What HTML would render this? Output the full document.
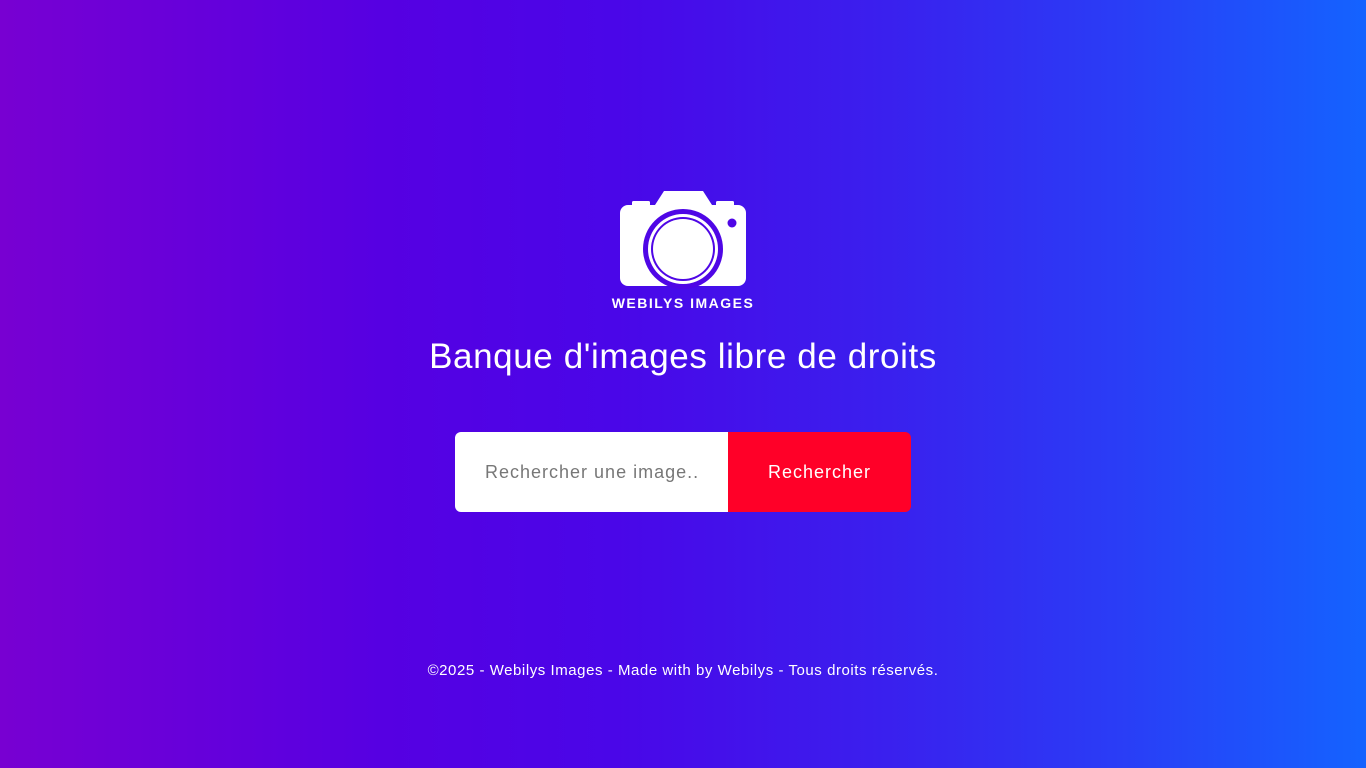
<!DOCTYPE html>
<html><head><meta charset="utf-8"><style>
html,body{margin:0;width:1366px;height:768px;overflow:hidden}
body{background:linear-gradient(90deg,#7800d2 0%,#5600e2 28%,#4a06e8 45%,#3a20ee 65%,#2a3df6 82%,#1463ff 100%);font-family:"Liberation Sans",sans-serif;color:#fff;position:relative}
.t{position:absolute;left:0;width:1366px;text-align:center;white-space:nowrap}
#logo{position:absolute;left:600px;top:180px}
h1{font-weight:normal;font-size:35px;top:337px;margin:0;letter-spacing:0.6px}
.in{position:absolute;left:455px;top:432px;width:273px;height:80px;background:#fff;border-radius:6px 0 0 6px;color:#777;font-size:18px;line-height:80px;box-sizing:border-box;padding-left:30px;letter-spacing:1px;white-space:nowrap}
.bt{position:absolute;left:728px;top:432px;width:183px;height:80px;background:#ff0028;border-radius:0 6px 6px 0;color:#fff;font-size:18px;line-height:80px;text-align:center;letter-spacing:1px}
.f{top:662px;font-size:15px;letter-spacing:0.55px}
</style></head><body>
<svg id="logo" width="170" height="140" viewBox="600 180 170 140">
<path d="M664 191 H703 L712 205 H655 Z" fill="#fff"/>
<rect x="632" y="201" width="18" height="6" rx="1.5" fill="#fff"/>
<rect x="716" y="201" width="18" height="6" rx="1.5" fill="#fff"/>
<rect x="620" y="205" width="126" height="81" rx="8" fill="#fff"/>
<circle cx="683" cy="249" r="40" fill="#4f06e6"/>
<circle cx="683" cy="249" r="35" fill="#fff"/>
<circle cx="683" cy="249" r="32" fill="#4f06e6"/>
<circle cx="683" cy="249" r="30" fill="#fff"/>
<circle cx="732" cy="223" r="4.5" fill="#4f06e6"/>
<text x="683" y="308" text-anchor="middle" font-family="Liberation Sans" font-weight="bold" font-size="14" fill="#fff" letter-spacing="1.5">WEBILYS IMAGES</text>
</svg>
<h1 class="t">Banque d'images libre de droits</h1>
<div class="in">Rechercher une image..</div>
<div class="bt">Rechercher</div>
<div class="t f">©2025 - Webilys Images - Made with by Webilys - Tous droits réservés.</div>
</body></html>
